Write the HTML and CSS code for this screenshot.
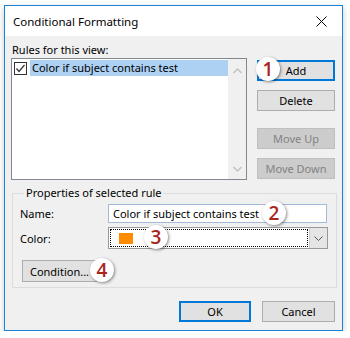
FILE: index.html
```html
<!DOCTYPE html>
<html>
<head>
<meta charset="utf-8">
<link rel="stylesheet" href="styles.css">
</head>
<body>
<div class="window">
  <div class="titlebar">
    <span class="title">Conditional Formatting</span>
    <span class="close"><svg width="11" height="11" viewBox="0 0 11 11"><path d="M0.5 0.5 L10.5 10.5 M10.5 0.5 L0.5 10.5" stroke="#000" stroke-width="1" fill="none"/></svg></span>
  </div>
  <div class="content">
    <div class="rules-label">Rules for this view:</div>
    <div class="rules-row">
      <div class="listbox">
        <div class="list-items">
          <div class="rule-item">
            <span class="checkbox"><svg width="11" height="11" viewBox="0 0 11 11"><path d="M1.5 5.5 L4 8.5 L9.5 2" stroke="#333" stroke-width="1.2" fill="none"/></svg></span>
            <span class="rule-text">Color if subject contains test</span>
          </div>
        </div>
        <div class="scrollbar">
          <svg width="9" height="6" viewBox="0 0 9 6"><path d="M0.5 5 L4.5 1 L8.5 5" stroke="#c2c2c2" stroke-width="1.4" fill="none"/></svg>
          <svg width="9" height="6" viewBox="0 0 9 6"><path d="M0.5 1 L4.5 5 L8.5 1" stroke="#c2c2c2" stroke-width="1.4" fill="none"/></svg>
        </div>
      </div>
      <div class="side-buttons">
        <button class="btn default">Add</button>
        <button class="btn">Delete</button>
        <button class="btn disabled move-up">Move Up</button>
        <button class="btn disabled">Move Down</button>
      </div>
    </div>
    <fieldset class="props">
      <legend>Properties of selected rule</legend>
      <div class="field-row name-row">
        <span class="field-label">Name:</span>
        <div class="textbox">Color if subject contains test</div>
      </div>
      <div class="field-row color-row">
        <span class="field-label">Color:</span>
        <div class="combo">
          <div class="combo-value"><span class="swatch"></span></div>
          <div class="combo-arrow"><svg width="9" height="5" viewBox="0 0 9 5"><path d="M0.5 0.5 L4.5 4.5 L8.5 0.5" stroke="#555" stroke-width="1" fill="none"/></svg></div>
        </div>
      </div>
      <button class="btn condition">Condition...</button>
    </fieldset>
    <div class="dialog-buttons">
      <button class="btn default ok">OK</button>
      <button class="btn cancel">Cancel</button>
    </div>
  </div>
  <span class="badge b1">1</span>
  <span class="badge b2">2</span>
  <span class="badge b3">3</span>
  <span class="badge b4">4</span>
</div>
</body>
</html>
```
FILE: styles.css
```css
* { box-sizing: border-box; }
html, body {
  margin: 0;
  padding: 0;
  background: #ffffff;
  font-family: "Noto Sans", "Segoe UI", sans-serif;
  font-size: 11px;
  color: #000;
}
.window {
  position: relative;
  margin: 5px 0 0 4px;
  width: 339px;
  height: 326px;
  border: 1px solid #1883d7;
  background: #f0f0f0;
  box-shadow: 0 2px 6px rgba(0,0,0,0.22);
  display: flex;
  flex-direction: column;
}
.titlebar {
  height: 30px;
  background: #ffffff;
  display: flex;
  align-items: center;
  justify-content: space-between;
  padding-left: 8px;
  padding-right: 15px;
  flex: none;
}
.title { font-size: 11.5px; }
.close { display: flex; }
.content {
  flex: 1;
  display: flex;
  flex-direction: column;
}
.rules-label {
  padding: 5px 0 0 7px;
  line-height: 17px;
  height: 22px;
}
.rules-row {
  display: flex;
  align-items: flex-start;
  padding-left: 6px;
}
.listbox {
  width: 236px;
  height: 122px;
  border: 1px solid #828790;
  background: #fff;
  display: flex;
}
.list-items {
  flex: 1;
  padding-top: 1px;
}
.rule-item {
  display: flex;
  align-items: center;
  height: 16px;
}
.checkbox {
  width: 13px;
  height: 13px;
  margin-left: 2px;
  margin-right: 3px;
  border: 1px solid #333;
  background: #fff;
  display: flex;
  align-items: center;
  justify-content: center;
  flex: none;
}
.rule-text {
  flex: 1;
  height: 16px;
  line-height: 16px;
  background: #add1f3;
  padding-left: 2px;
  white-space: nowrap;
  overflow: hidden;
}
.scrollbar {
  width: 18px;
  background: #f0f0f0;
  display: flex;
  flex-direction: column;
  align-items: center;
  justify-content: space-between;
  padding: 9px 0 7px;
}
.side-buttons {
  margin-left: 10px;
  margin-top: 2px;
  display: flex;
  flex-direction: column;
  gap: 9px;
}
.side-buttons .move-up { margin-top: 8px; }
.btn {
  font-family: inherit;
  font-size: 11px;
  width: 78px;
  height: 21px;
  padding: 0;
  margin: 0;
  background: #e1e1e1;
  border: 1px solid #adadad;
  color: #000;
  line-height: 17px;
}
.btn.default { border: 2px solid #0078d7; }
.btn.disabled {
  background: #cccccc;
  border-color: #bfbfbf;
  color: #838383;
}
.props {
  margin: 3px 5px 0 7px;
  padding: 1px 7px 5px;
  border: 1px solid #dcdcdc;
  min-width: 0;
}
.props legend {
  padding: 0 2px;
  margin-left: 4px;
  line-height: 20px;
}
.field-row {
  display: flex;
  align-items: center;
}
.field-label { width: 88px; }
.textbox {
  width: 219px;
  height: 19px;
  border: 1px solid #a3b9d8;
  background: #fff;
  line-height: 17px;
  padding-left: 4px;
  white-space: nowrap;
}
.color-row { margin-top: 4px; }
.combo {
  width: 220px;
  height: 22px;
  border: 1px solid #999999;
  background: #fff;
  display: flex;
}
.combo-value {
  flex: 1;
  margin: 1px;
  border: 1px dotted #000;
  display: flex;
  align-items: center;
  padding-left: 8px;
}
.swatch {
  width: 14px;
  height: 11px;
  background: #ff8c00;
}
.combo-arrow {
  width: 18px;
  background: #e5e5e5;
  border-left: 1px solid #cccccc;
  display: flex;
  align-items: center;
  justify-content: center;
}
.btn.condition {
  width: 75px;
  height: 22px;
  margin: 11px 0 0 2px;
  display: block;
}
.dialog-buttons {
  display: flex;
  justify-content: flex-end;
  gap: 11px;
  margin-top: 13px;
  padding-right: 7px;
}
.btn.ok { width: 72px; }
.btn.cancel { width: 73px; }
.badge {
  position: absolute;
  width: 24px;
  height: 24px;
  border-radius: 50%;
  background: #fff;
  box-shadow: 1px 1px 3px rgba(0,0,0,0.45);
  color: #a8261d;
  font-family: "Open Sans", "Noto Sans", sans-serif;
  font-weight: 600;
  font-size: 19px;
  line-height: 24px;
  text-align: center;
}
.b1 { left: 251px; top: 51px; }
.b2 { left: 257px; top: 195px; }
.b3 { left: 139px; top: 219px; }
.b4 { left: 85px; top: 252px; }
```
